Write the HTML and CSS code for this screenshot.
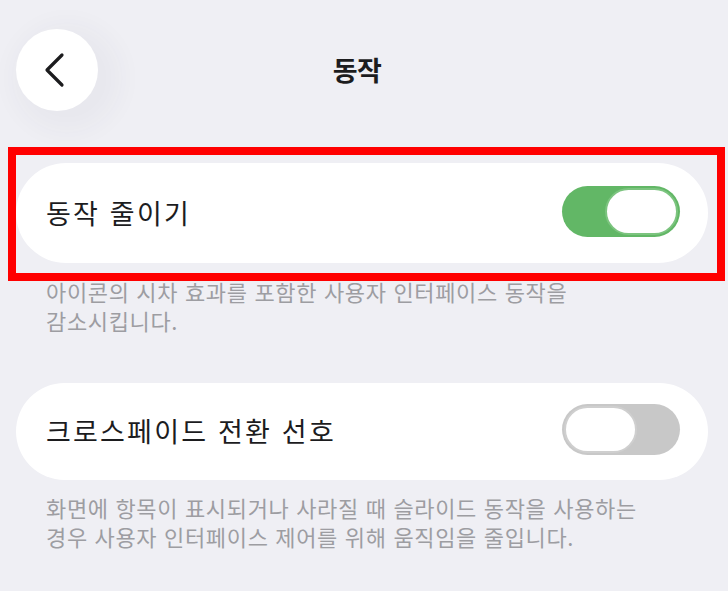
FILE: index.html
```html
<!DOCTYPE html>
<html lang="ko">
<head>
<meta charset="utf-8">
<title>동작</title>
<link rel="stylesheet" href="styles.css">
</head>
<body>
<div class="page">
  <header class="header">
    <button class="back" aria-label="뒤로">
      <svg width="24" height="36" viewBox="0 0 24 36" fill="none">
        <path d="M19 3 L4 18 L19 33" stroke="#1c1c1e" stroke-width="3.2" stroke-linecap="round" stroke-linejoin="round"/>
      </svg>
    </button>
    <h1 class="title">동작</h1>
    <span class="spacer"></span>
  </header>

  <div class="highlight">
    <div class="card">
      <span class="label">동작 줄이기</span>
      <span class="toggle on"><span class="knob"></span></span>
    </div>
  </div>
  <p class="desc first">아이콘의 시차 효과를 포함한 사용자 인터페이스 동작을<br>감소시킵니다.</p>

  <div class="card second">
    <span class="label">크로스페이드 전환 선호</span>
    <span class="toggle off"><span class="knob"></span></span>
  </div>
  <p class="desc">화면에 항목이 표시되거나 사라질 때 슬라이드 동작을 사용하는<br>경우 사용자 인터페이스 제어를 위해 움직임을 줄입니다.</p>
</div>
</body>
</html>
```

FILE: styles.css
```css
* { box-sizing: border-box; }

html, body {
  margin: 0;
  padding: 0;
  background: #efeff4;
}

body {
  font-family: "Noto Sans CJK KR", "Noto Sans", sans-serif;
  color: #1c1c1e;
  width: 728px;
  height: 591px;
  overflow: hidden;
}

.page {
  display: flex;
  flex-direction: column;
}

.header {
  display: grid;
  grid-template-columns: 1fr auto 1fr;
  align-items: center;
  padding: 29px 30px 0 16px;
  height: 147px;
  align-content: start;
}

.back {
  width: 82px;
  height: 82px;
  border-radius: 50%;
  border: none;
  background: #ffffff;
  display: flex;
  align-items: center;
  justify-content: center;
  padding: 0 4px 0 0;
  box-shadow: 10px 8px 24px 14px rgba(60, 60, 90, 0.035);
  justify-self: start;
}

.title {
  margin: 0;
  font-size: 27px;
  font-weight: 700;
  line-height: 82px;
  letter-spacing: -0.5px;
}

.highlight {
  border: 8px solid #ff0000;
  margin: 0 3px 0 8px;
  padding: 8px 9px 10px 0;
}

.card {
  background: #ffffff;
  border-radius: 50px;
  height: 100px;
  display: flex;
  align-items: center;
  justify-content: space-between;
  padding: 0 28px 0 30px;
}

.card.second {
  margin: 0 20px 0 16px;
  height: 97px;
}

.label {
  font-size: 27px;
  font-weight: 400;
  letter-spacing: 2.2px;
  line-height: 1;
  margin-bottom: 2px;
}

.toggle {
  width: 118px;
  height: 51px;
  border-radius: 26px;
  display: flex;
  align-items: center;
  padding: 0 2px;
  margin-top: -4px;
}

.toggle.on {
  background: #62b766;
  justify-content: flex-end;
}

.toggle.off {
  background: #c8c8c8;
  justify-content: flex-start;
}

.knob {
  width: 73px;
  height: 47px;
  border-radius: 24px;
  background: #ffffff;
}

.toggle.on .knob {
  border: 2.5px solid #7cc47f;
}

.toggle.off .knob {
  border: 2.5px solid #cfcfcf;
}

.desc {
  margin: 0;
  padding: 0 0 0 46px;
  font-size: 22px;
  line-height: 29px;
  color: #9d9da2;
  letter-spacing: 0.65px;
}

.desc.first {
  margin: -4px 0 48px;
}

.second + .desc {
  margin-top: 13px;
}
```
